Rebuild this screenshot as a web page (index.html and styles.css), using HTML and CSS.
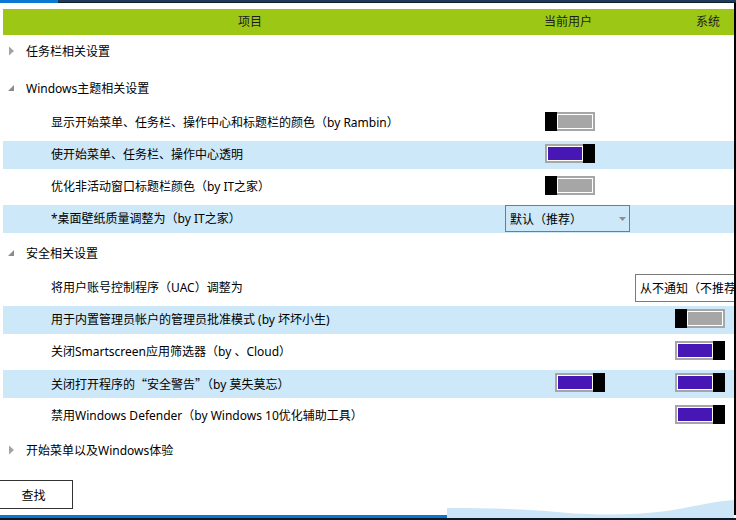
FILE: index.html
```html
<!DOCTYPE html>
<html lang="zh-CN">
<head>
<meta charset="utf-8">
<title>设置</title>
<link rel="stylesheet" href="styles.css">
</head>
<body>
<div class="screen">
  <div class="topbar"><div class="tb-blue"></div><div class="tb-dark"></div></div>
  <div class="main">
    <div class="window">
      <div class="header">
        <span class="h-item">项目</span>
        <span class="h-cur">当前用户</span>
        <span class="h-sys">系统</span>
      </div>

      <div class="group g1">
        <div class="ghead">
          <svg class="tri" viewBox="0 0 6 10"><path d="M1 0.5 L6 5 L1 9.5 Z" fill="#a3a3a3"/></svg>
          <span>任务栏相关设置</span>
        </div>
      </div>

      <div class="group g2">
        <div class="ghead">
          <svg class="tri" viewBox="0 0 6 10"><path d="M6 2 L6 8 L0 8 Z" fill="#8c8c8c"/></svg>
          <span>Windows主题相关设置</span>
        </div>
        <div class="items">
          <div class="row">
            <div class="label">显示开始菜单、任务栏、操作中心和标题栏的颜色（by Rambin）</div>
            <div class="cell cur"><div class="toggle off tg-a"><div class="thumb"></div><div class="track"></div></div></div>
          </div>
          <div class="row hl">
            <div class="label">使开始菜单、任务栏、操作中心透明</div>
            <div class="cell cur"><div class="toggle on tg-a"><div class="track"></div><div class="thumb"></div></div></div>
          </div>
          <div class="row">
            <div class="label">优化非活动窗口标题栏颜色（by IT之家）</div>
            <div class="cell cur"><div class="toggle off tg-a"><div class="thumb"></div><div class="track"></div></div></div>
          </div>
          <div class="row hl">
            <div class="label">*桌面壁纸质量调整为（by IT之家）</div>
            <div class="cell cur">
              <div class="combo">
                <span>默认（推荐）</span>
                <svg class="arrow" viewBox="0 0 7 4"><path d="M0 0 L7 0 L3.5 4 Z" fill="#8f8f8f"/></svg>
              </div>
            </div>
          </div>
        </div>
      </div>

      <div class="group g3">
        <div class="ghead">
          <svg class="tri" viewBox="0 0 6 10"><path d="M6 2 L6 8 L0 8 Z" fill="#8c8c8c"/></svg>
          <span>安全相关设置</span>
        </div>
        <div class="items">
          <div class="row">
            <div class="label">将用户账号控制程序（UAC）调整为</div>
            <div class="cell sys"><div class="combo wide"><span>从不通知（不推荐）</span></div></div>
          </div>
          <div class="row hl">
            <div class="label">用于内置管理员帐户的管理员批准模式 (by 坏坏小生)</div>
            <div class="cell sys"><div class="toggle off tg-a"><div class="thumb"></div><div class="track"></div></div></div>
          </div>
          <div class="row">
            <div class="label">关闭Smartscreen应用筛选器（by 、Cloud）</div>
            <div class="cell sys"><div class="toggle on tg-a"><div class="track"></div><div class="thumb"></div></div></div>
          </div>
          <div class="row hl">
            <div class="label">关闭打开程序的<span class="cjk">“</span>安全警告<span class="cjk">”</span>（by 莫失莫忘）</div>
            <div class="cell cur"><div class="toggle on tg-b"><div class="track"></div><div class="thumb"></div></div></div>
            <div class="cell sys"><div class="toggle on tg-a"><div class="track"></div><div class="thumb"></div></div></div>
          </div>
          <div class="row">
            <div class="label">禁用Windows Defender（by Windows 10优化辅助工具）</div>
            <div class="cell sys"><div class="toggle on tg-a"><div class="track"></div><div class="thumb"></div></div></div>
          </div>
        </div>
      </div>

      <div class="group g4">
        <div class="ghead">
          <svg class="tri" viewBox="0 0 6 10"><path d="M1 0.5 L6 5 L1 9.5 Z" fill="#a3a3a3"/></svg>
          <span>开始菜单以及Windows体验</span>
        </div>
      </div>

      <button class="find" type="button">查找</button>
    </div>
    <div class="edge"></div>
  </div>
  <div class="bottom"><div class="bottom-blue"></div><div class="bottom-dark"></div></div>
  <svg class="wave" viewBox="0 0 287 20" preserveAspectRatio="none"><path d="M0 10 C40 10 80 11 110 14 C140 17 180 18 220 13 C250 8 270 3 287 2 L287 20 L0 20 Z" fill="#cce6f7"/></svg>
</div>
</body>
</html>
```

FILE: styles.css
```css
* { box-sizing: border-box; margin: 0; padding: 0; }
html, body { width: 736px; height: 520px; overflow: hidden; background: #fff; }
body {
  font-family: "Noto Sans", "Noto Sans CJK SC", sans-serif;
  font-size: 12px;
  color: #000;
}
.cjk { font-family: "Noto Sans CJK SC", sans-serif; }

.screen { position: relative; display: flex; flex-direction: column; width: 736px; height: 520px; }

.topbar { display: flex; height: 3px; flex: none; }
.tb-blue { width: 58px; background: #0a78d2; }
.tb-dark { flex: 1; background: linear-gradient(#1a3c60 0, #1a3c60 2px, #0f1c2a 2px); }

.main { flex: 1; display: flex; min-height: 0; }
.window {
  width: 734px;
  overflow: hidden;
  padding: 6px 0 0 3px;
  display: flex;
  flex-direction: column;
}
.edge { width: 2px; background: #000; }

.bottom { height: 5px; flex: none; display: flex; flex-direction: column; }
.bottom-blue { height: 3px; width: 447px; background: #0a78d2; }
.bottom-dark { height: 2px; background: #0d1a26; }
.wave { position: absolute; left: 447px; top: 498px; width: 287px; height: 20px; }

.header {
  height: 26px;
  flex: none;
  background: #9cc715;
  display: flex;
  align-items: center;
  padding-left: 235px;
  color: #1c1c1c;
  line-height: 26px;
}
.h-cur { margin-left: 282px; }
.h-sys { margin-left: 104px; }

.group { flex: none; }
.g1 { margin: 1px 0 7px; }
.g2, .g3 { margin-bottom: 3px; }

.ghead { height: 30px; display: flex; align-items: center; }
.tri { width: 6px; height: 10px; margin-left: 5px; margin-right: 12px; flex: none; }

.items { display: flex; flex-direction: column; gap: 4px; padding: 6px 0 2px; }
.row {
  display: grid;
  grid-template-columns: 502px 130px 1fr;
  height: 28px;
}
.row.hl { background: #cce8f9; }
.label { grid-column: 1; padding-left: 48px; line-height: 28px; white-space: nowrap; }
.cell { display: flex; align-items: flex-start; min-width: 0; }
.cur { grid-column: 2; grid-row: 1; }
.sys { grid-column: 3; grid-row: 1; }

.toggle { display: flex; width: 50px; height: 19px; margin-top: 3px; flex: none; }
.tg-a { margin-left: 40px; }
.tg-b { margin-left: 50px; }
.thumb { width: 12px; background: #000; flex: none; }
.track {
  flex: 1;
  border: 2px solid #a6a6a6;
  box-shadow: inset 0 0 0 1px #fff;
  background: #a6a6a6;
}
.off .track { border-left: 0; }
.on .track { border-right: 0; background: #4617b4; }

.combo {
  height: 27px;
  width: 125px;
  border: 1px solid #7a7a7a;
  display: flex;
  align-items: center;
  justify-content: space-between;
  padding: 0 3px 0 4px;
  white-space: nowrap;
  flex: none;
}
.arrow { width: 7px; height: 4px; }
.combo.wide { width: 160px; height: 28px; background: #fff; }

.find {
  align-self: flex-start;
  margin-top: 15px;
  margin-left: -9px;
  width: 79px;
  height: 29px;
  border: 1px solid #333;
  background: #fff;
  font-family: "Noto Sans", "Noto Sans CJK SC", sans-serif;
  font-size: 12px;
  color: #000;
  flex: none;
}
```
